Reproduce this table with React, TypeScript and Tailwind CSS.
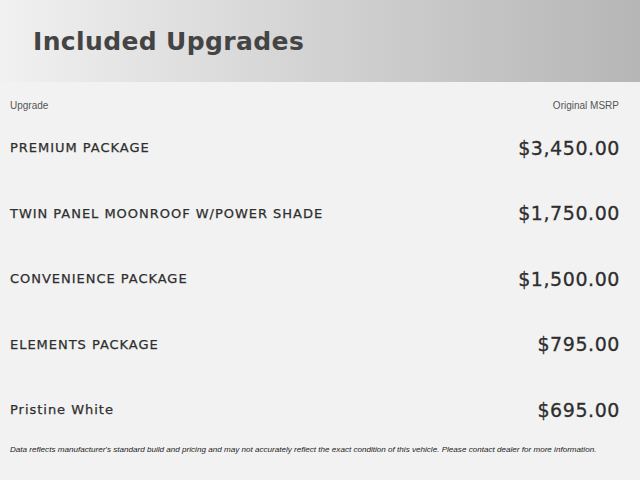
const upgrades = [
  { name: "PREMIUM PACKAGE", price: "$3,450.00" },
  { name: "TWIN PANEL MOONROOF W/POWER SHADE", price: "$1,750.00" },
  { name: "CONVENIENCE PACKAGE", price: "$1,500.00" },
  { name: "ELEMENTS PACKAGE", price: "$795.00" },
  { name: "Pristine White", price: "$695.00" },
];

export default function App() {
  return (
    <div className="w-[640px] h-[480px] bg-[#f2f2f2] overflow-hidden">
      {/* header band */}
      <div className="h-[82px] bg-gradient-to-r from-[#f1f1f1] via-[#d2d2d2] to-[#b6b6b6] flex items-center px-[33px]">
        <h1 className="font-['DejaVu_Sans',sans-serif] font-bold text-[25px] text-[#444] tracking-[0.015em] mt-[2px]">
          Included Upgrades
        </h1>
      </div>

      <div className="pl-[10px] pr-[21px]">
        <div className="h-[33px] pt-[18px] flex justify-between text-[10px] leading-[12px] text-[#555] font-['Liberation_Sans',Arial,sans-serif]">
          <span>Upgrade</span>
          <span>Original MSRP</span>
        </div>

        {upgrades.map((u) => (
          <div
            key={u.name}
            className="h-[65.5px] flex items-center justify-between font-['DejaVu_Sans',sans-serif] text-[#2e2e2e]"
          >
            <span className="text-[13px] tracking-[0.075em] [-webkit-text-stroke:0.25px_#2e2e2e]">{u.name}</span>
            <span className="text-[19px] tracking-[0.03em] -mr-[1px] [-webkit-text-stroke:0.3px_#2e2e2e]">{u.price}</span>
          </div>
        ))}

        <p className="pt-[1px] text-[8.1px] leading-[12px] italic text-[#222] whitespace-nowrap font-['Liberation_Sans',Arial,sans-serif]">
          Data reflects manufacturer's standard build and pricing and may not accurately reflect the exact condition of this vehicle. Please contact dealer for more information.
        </p>
      </div>
    </div>
  );
}
